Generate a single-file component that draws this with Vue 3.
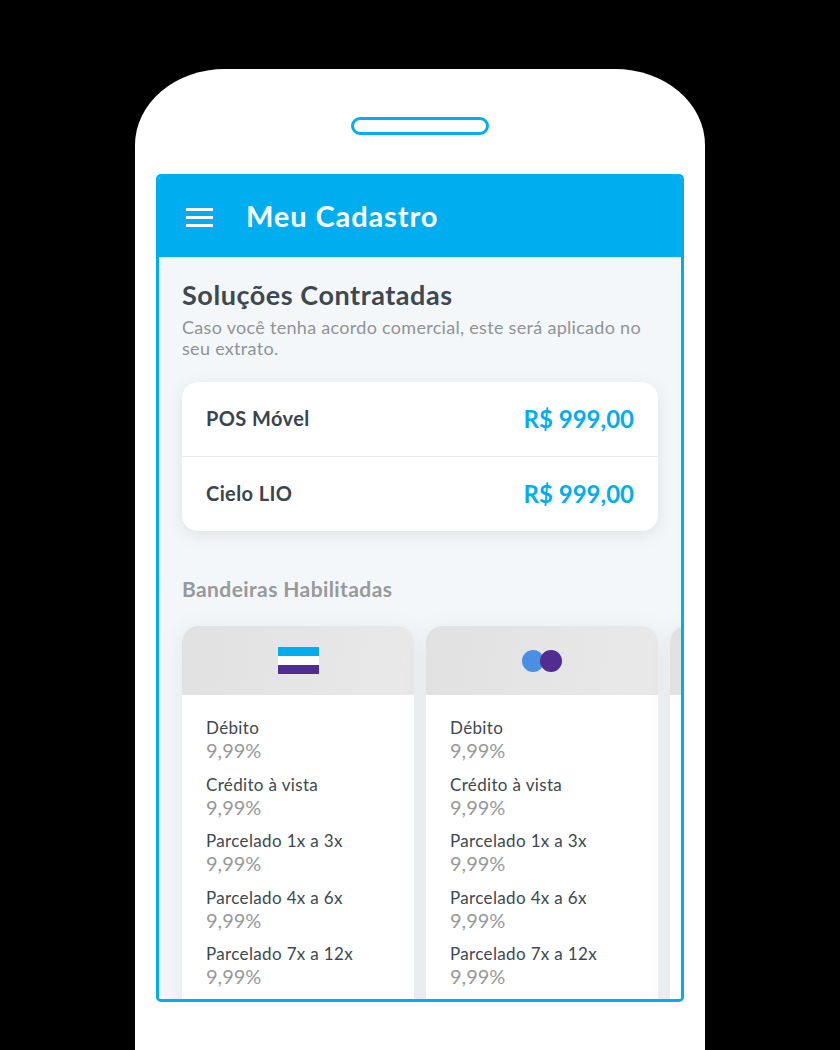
<template>
  <div class="phone">
    <div class="speaker"></div>
    <div class="screen">
      <header class="topbar">
        <div class="burger"><span></span><span></span><span></span></div>
        <div class="topbar-title">Meu Cadastro</div>
      </header>
      <main class="content">
        <h1 class="title">Soluções Contratadas</h1>
        <p class="subtitle">Caso você tenha acordo comercial, este será aplicado no seu extrato.</p>
        <div class="solutions">
          <div v-for="s in solutions" :key="s" class="solution">
            <span class="solution-name">{{ s }}</span>
            <span class="solution-price">R$ 999,00</span>
          </div>
        </div>
        <h2 class="section">Bandeiras Habilitadas</h2>
        <div class="brands">
          <div v-for="b in brands" :key="b" class="brand">
            <div class="brand-head">
              <svg v-if="b === 'flag'" width="42" height="27" viewBox="0 0 42 27">
                <rect x="1" y="0" width="41" height="9" fill="#00aeef" />
                <rect x="1" y="9" width="41" height="9" fill="#fff" />
                <rect x="1" y="18" width="41" height="9" fill="#512d92" />
              </svg>
              <svg v-if="b === 'dots'" width="42" height="24" viewBox="0 0 42 24">
                <circle cx="12" cy="12" r="11" fill="#4a90e2" />
                <circle cx="30" cy="12" r="11" fill="#512d92" />
              </svg>
            </div>
            <div v-if="b !== 'other'" class="brand-body">
              <div v-for="r in rates" :key="r" class="rate">
                <div class="rate-name">{{ r }}</div>
                <div class="rate-value">9,99%</div>
              </div>
            </div>
          </div>
        </div>
      </main>
    </div>
  </div>
</template>

<script setup>
const solutions = ['POS Móvel', 'Cielo LIO']
const brands = ['flag', 'dots', 'other']
const rates = ['Débito', 'Crédito à vista', 'Parcelado 1x a 3x', 'Parcelado 4x a 6x', 'Parcelado 7x a 12x']
</script>

<style>
html, body {
  background: #000;
  margin: 0;
  height: 1050px;
  overflow: hidden;
}
</style>

<style scoped>
.phone {
  width: 570px;
  height: 981px;
  margin: 69px 0 0 135px;
  padding-top: 48px;
  box-sizing: border-box;
  background: #fff;
  border-radius: 90px 90px 0 0 / 76px 76px 0 0;
  font-family: Lato, "Open Sans", sans-serif;
  overflow: hidden;
}

.speaker {
  width: 138px;
  height: 18px;
  margin: 0 auto 39px;
  box-sizing: border-box;
  border: 3px solid #00aeef;
  border-radius: 9px;
}

.screen {
  width: 528px;
  height: 828px;
  margin: 0 auto;
  box-sizing: border-box;
  border: 3px solid #00aeef;
  border-radius: 5px;
  overflow: hidden;
  display: flex;
  flex-direction: column;
}

.topbar {
  height: 80px;
  flex: none;
  background: #00aeef;
  display: flex;
  align-items: center;
  padding-left: 27px;
  box-sizing: border-box;
}

.burger {
  width: 27px;
  display: flex;
  flex-direction: column;
  gap: 5px;
  margin-right: 33px;
}

.burger span {
  height: 3px;
  background: #fff;
}

.topbar-title {
  color: #fff;
  font-size: 29px;
  font-weight: 700;
  letter-spacing: 0.9px;
  line-height: 32px;
  margin-top: -2px;
}

.content {
  flex: 1;
  min-height: 0;
  background: #f4f7f9;
  padding: 22px 0 0 23px;
  overflow: hidden;
}

.title {
  margin: 0;
  color: #3d484f;
  font-size: 27px;
  font-weight: 700;
  letter-spacing: 0.55px;
  line-height: 32px;
}

.subtitle {
  width: 476px;
  margin: 0;
  padding-top: 6px;
  color: #8f9396;
  font-size: 18px;
  letter-spacing: 0.3px;
  line-height: 21px;
}

.solutions {
  width: 476px;
  margin-top: 23px;
  background: #fff;
  border-radius: 16px;
  box-shadow: 0 4px 16px rgba(60, 80, 90, 0.12);
}

.solution {
  height: 72px;
  padding: 0 24px 2px;
  display: flex;
  align-items: center;
  justify-content: space-between;
}

.solution + .solution {
  border-top: 1px solid #e6e9eb;
}

.solution-name {
  color: #3a444b;
  font-size: 20px;
  font-weight: 700;
  letter-spacing: 0.4px;
}

.solution-price {
  color: #00aeef;
  font-size: 24px;
  font-weight: 700;
}

.section {
  margin: 46px 0 0;
  color: #97999b;
  font-size: 21px;
  font-weight: 700;
  letter-spacing: 0.4px;
  line-height: 24px;
}

.brands {
  display: flex;
  gap: 12px;
  margin-top: 25px;
}

.brand {
  flex: none;
  width: 232px;
  background: #fff;
  border-radius: 16px 16px 0 0;
  box-shadow: 0 4px 24px rgba(60, 80, 90, 0.09);
}

.brand-head {
  height: 69px;
  display: flex;
  align-items: center;
  justify-content: center;
  border-radius: 16px 16px 0 0;
  background: linear-gradient(100deg, #e1e1e1, #e9e9e9);
}

.brand-body {
  padding: 21px 24px 30px;
}

.rate {
  height: 56.5px;
}

.rate-name {
  color: #3d484f;
  font-size: 17px;
  letter-spacing: 0.35px;
  line-height: 23px;
}

.rate-value {
  color: #97999b;
  font-size: 20px;
  line-height: 23px;
}
</style>
